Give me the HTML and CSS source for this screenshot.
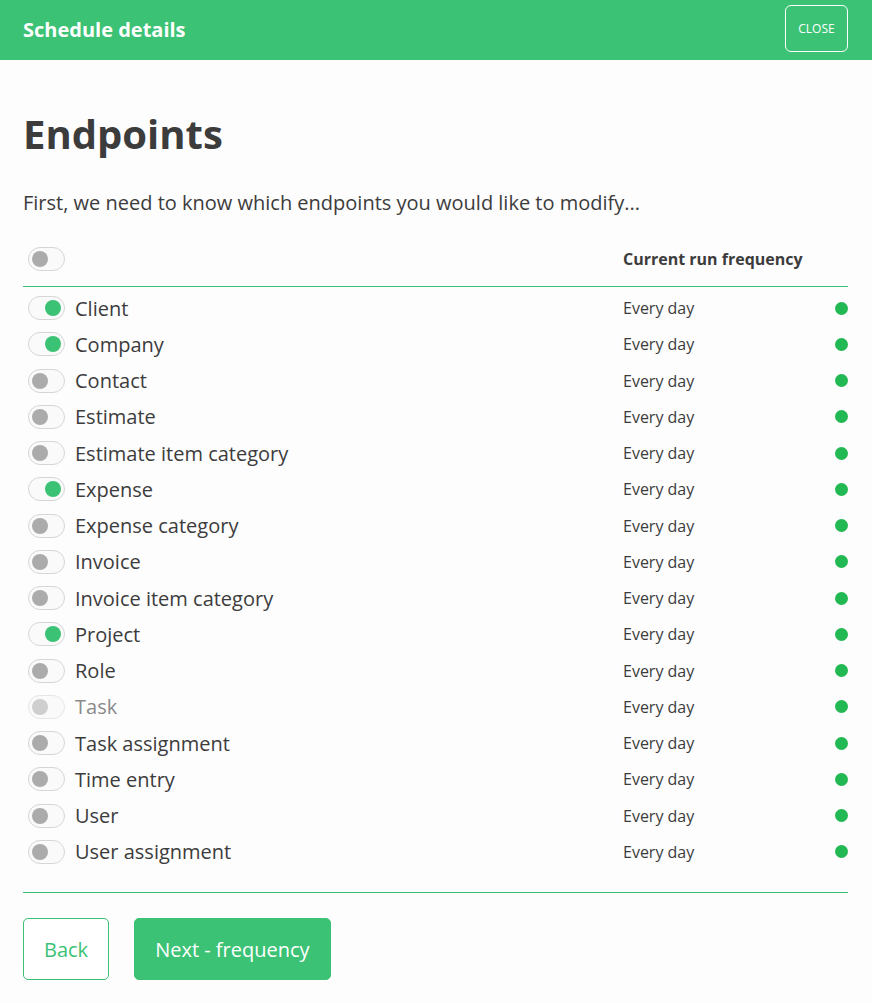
FILE: index.html
```html
<!DOCTYPE html>
<html lang="en">
<head>
    <meta charset="UTF-8">
    <meta name="viewport" content="width=device-width, initial-scale=1.0">
    <title>Schedule details</title>
    <link rel="stylesheet" href="styles.css">
</head>
<body>
    <!-- Header -->
    <header class="topbar">
        <h1 class="topbar-title">Schedule details</h1>
        <button class="btn-close">CLOSE</button>
    </header>

    <!-- Main Content -->
    <main class="content">
        <h2 class="page-title">Endpoints</h2>
        <p class="intro">First, we need to know which endpoints you would like to modify...</p>

        <div class="table-head">
            <div class="cell-name"><span class="toggle"></span></div>
            <div class="cell-freq">Current run frequency</div>
            <div></div>
        </div>

        <div class="endpoint-list">
            <div class="row"><div class="cell-name"><span class="toggle on"></span>Client</div><div class="cell-freq">Every day</div><span class="dot"></span></div>
            <div class="row"><div class="cell-name"><span class="toggle on"></span>Company</div><div class="cell-freq">Every day</div><span class="dot"></span></div>
            <div class="row"><div class="cell-name"><span class="toggle"></span>Contact</div><div class="cell-freq">Every day</div><span class="dot"></span></div>
            <div class="row"><div class="cell-name"><span class="toggle"></span>Estimate</div><div class="cell-freq">Every day</div><span class="dot"></span></div>
            <div class="row"><div class="cell-name"><span class="toggle"></span>Estimate item category</div><div class="cell-freq">Every day</div><span class="dot"></span></div>
            <div class="row"><div class="cell-name"><span class="toggle on"></span>Expense</div><div class="cell-freq">Every day</div><span class="dot"></span></div>
            <div class="row"><div class="cell-name"><span class="toggle"></span>Expense category</div><div class="cell-freq">Every day</div><span class="dot"></span></div>
            <div class="row"><div class="cell-name"><span class="toggle"></span>Invoice</div><div class="cell-freq">Every day</div><span class="dot"></span></div>
            <div class="row"><div class="cell-name"><span class="toggle"></span>Invoice item category</div><div class="cell-freq">Every day</div><span class="dot"></span></div>
            <div class="row"><div class="cell-name"><span class="toggle on"></span>Project</div><div class="cell-freq">Every day</div><span class="dot"></span></div>
            <div class="row"><div class="cell-name"><span class="toggle"></span>Role</div><div class="cell-freq">Every day</div><span class="dot"></span></div>
            <div class="row disabled"><div class="cell-name"><span class="toggle"></span>Task</div><div class="cell-freq">Every day</div><span class="dot"></span></div>
            <div class="row"><div class="cell-name"><span class="toggle"></span>Task assignment</div><div class="cell-freq">Every day</div><span class="dot"></span></div>
            <div class="row"><div class="cell-name"><span class="toggle"></span>Time entry</div><div class="cell-freq">Every day</div><span class="dot"></span></div>
            <div class="row"><div class="cell-name"><span class="toggle"></span>User</div><div class="cell-freq">Every day</div><span class="dot"></span></div>
            <div class="row"><div class="cell-name"><span class="toggle"></span>User assignment</div><div class="cell-freq">Every day</div><span class="dot"></span></div>
        </div>

        <div class="actions">
            <button class="btn btn-outline">Back</button>
            <button class="btn btn-primary">Next - frequency</button>
        </div>
    </main>
</body>
</html>
```

FILE: styles.css
```css
/* General styles */
body {
    font-family: "Open Sans", "Liberation Sans", sans-serif;
    background-color: #fdfdfd;
    color: #3c3c3c;
    margin: 0;
    padding: 0;
}
.topbar {
    background-color: #3bc274;
    height: 60px;
    display: flex;
    align-items: center;
    justify-content: space-between;
    padding: 0 24px 0 23px;
}
.topbar-title {
    color: #fff;
    font-size: 20px;
    font-weight: bold;
    margin: 0 0 2px;
}
.btn-close {
    font-family: inherit;
    background: transparent;
    color: #fff;
    border: 1px solid #fff;
    border-radius: 6px;
    width: 63px;
    height: 47px;
    margin-bottom: 3px;
    font-size: 12px;
    padding: 0;
    cursor: pointer;
}
.content {
    padding: 0 24px 0 23px;
}
.page-title {
    font-size: 40px;
    font-weight: bold;
    margin: 47px 0 0;
    line-height: 54px;
}
.intro {
    font-size: 20px;
    margin: 28px 0 0;
    line-height: 28px;
}
.table-head,
.row {
    display: grid;
    grid-template-columns: 600px 1fr 13px;
    align-items: center;
}
.table-head {
    margin-top: 17px;
    height: 50px;
    padding-bottom: 2px;
}
.table-head .cell-freq {
    font-weight: bold;
    font-size: 16px;
}
.endpoint-list {
    padding: 3px 0 22px;
    border-top: 1px solid #3bc274;
    border-bottom: 1px solid #3bc274;
}
.row {
    height: 36.25px;
}
.cell-name {
    display: flex;
    align-items: center;
    font-size: 20px;
    padding-left: 5px;
}
.cell-freq {
    font-size: 16px;
}
.row.disabled .cell-name {
    color: #8a8a8a;
}
.toggle {
    position: relative;
    box-sizing: border-box;
    width: 37px;
    height: 24px;
    border: 1px solid #d6d6d6;
    border-radius: 12px;
    background-color: #fafafa;
    margin-right: 10px;
    flex-shrink: 0;
}
.toggle::after {
    content: "";
    position: absolute;
    top: 3px;
    left: 3px;
    width: 16px;
    height: 16px;
    border-radius: 50%;
    background-color: #ababab;
}
.toggle.on::after {
    left: auto;
    right: 3px;
    background-color: #3bc274;
}
.row.disabled .toggle {
    border-color: #e6e6e6;
}
.row.disabled .toggle::after {
    background-color: #cfcfcf;
}
.dot {
    width: 13px;
    height: 13px;
    border-radius: 50%;
    background-color: #22b853;
}
.actions {
    display: flex;
    gap: 25px;
    padding-top: 25px;
}
.btn {
    font-family: inherit;
    font-size: 20px;
    height: 62px;
    border-radius: 5px;
    padding: 0 20px;
    cursor: pointer;
}
.btn-outline {
    background-color: #fff;
    color: #3bc274;
    border: 1px solid #3bc274;
}
.btn-primary {
    background-color: #3bc274;
    color: #fff;
    border: 1px solid #3bc274;
}
```
